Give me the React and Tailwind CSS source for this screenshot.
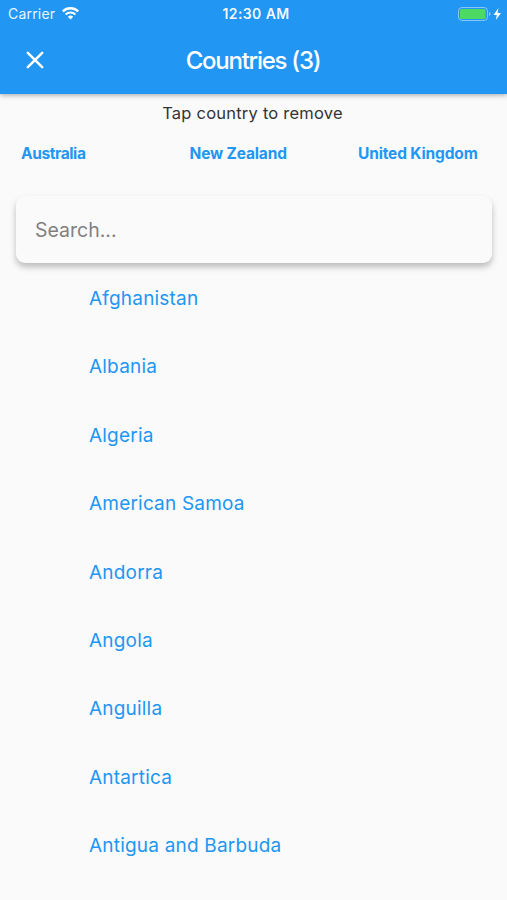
const selected = ['Australia', 'New Zealand', 'United Kingdom'];

const countries = [
  'Afghanistan',
  'Albania',
  'Algeria',
  'American Samoa',
  'Andorra',
  'Angola',
  'Anguilla',
  'Antartica',
  'Antigua and Barbuda',
];

function StatusBar() {
  return (
    <div className="flex h-[27px] items-center justify-between pr-[5px] pl-2 text-sm">
      <div className="flex w-24 items-center gap-[7px]">
        <span className="tracking-[0.2px] text-white/90">Carrier</span>
        <svg width="17" height="13" viewBox="0 0 17 13" fill="none" stroke="currentColor">
          <path d="M.8 4.4a11 11 0 0 1 15.4 0" strokeWidth="2.3" />
          <path d="M3.6 7.5a7 7 0 0 1 9.8 0" strokeWidth="2.2" />
          <path d="M8.5 12.5 5.8 9.7a4 4 0 0 1 5.4 0z" fill="currentColor" stroke="none" />
        </svg>
      </div>
      <span className="pl-[2px] font-semibold tracking-[0.4px] text-white/95">12:30 AM</span>
      <div className="flex w-24 items-center justify-end">
        <svg width="44" height="14" viewBox="0 0 44 14">
          <rect x="0.5" y="0.5" width="29" height="13" rx="3.5" fill="none" stroke="white" strokeOpacity="0.45" />
          <rect x="2" y="2" width="25.5" height="10" rx="1.5" fill="#4cd964" />
          <path d="M31 5v4q1.6-.6 1.6-2T31 5z" fill="white" fillOpacity="0.5" />
          <path d="M40.5 1 35.5 8h3.3l-1 5L43 6h-3.5z" fill="white" />
        </svg>
      </div>
    </div>
  );
}

function Header() {
  return (
    <header className="h-[94px] bg-[#2196f3] text-white shadow-[0_1px_5px_rgba(0,0,0,0.35)]">
      <StatusBar />
      <div className="grid h-[66px] grid-cols-[70px_1fr_70px] items-center">
        <button type="button" aria-label="Close" className="flex justify-center">
          <svg width="18" height="18" viewBox="0 0 18 18" stroke="currentColor" strokeWidth="2.5" strokeLinecap="round">
            <path d="M1.8 1.8 16.2 16.2M16.2 1.8 1.8 16.2" />
          </svg>
        </button>
        <h1 className="pt-px pr-px text-center text-2xl font-medium tracking-[-1.25px]">Countries (3)</h1>
      </div>
    </header>
  );
}

export default function App() {
  return (
    <div className="h-screen overflow-hidden bg-[#fafafa] font-['Inter',sans-serif]">
      <Header />
      <p className="pt-[7px] pr-[2px] text-center text-[16.5px] leading-6 tracking-[0.22px] text-[#333]">
        Tap country to remove
      </p>
      <div className="grid h-[57px] grid-cols-[168.5px_168.5px_1fr] items-center pl-[21px] text-[15.5px] font-bold tracking-[-0.15px] text-[#2196f3]">
        {selected.map((name) => (
          <button type="button" key={name} className="text-left whitespace-nowrap first:tracking-[-0.4px]">
            {name}
          </button>
        ))}
      </div>
      <div className="mr-[15px] ml-4 mt-[14px] rounded-[9px] bg-[#fafafa] shadow-[0_4px_6px_rgba(0,0,0,0.25)]">
        <input
          className="block h-[67px] w-full px-[19px] text-[19.5px] text-[#222] outline-none placeholder:text-[#808080]"
          placeholder="Search..."
        />
      </div>
      <ul className="pt-[2px]">
        {countries.map((name) => (
          <li key={name} className="flex h-[68.4px] items-center pl-[89px] text-[19px] tracking-[0.2px] text-[#2196f3]">
            {name}
          </li>
        ))}
      </ul>
    </div>
  );
}
